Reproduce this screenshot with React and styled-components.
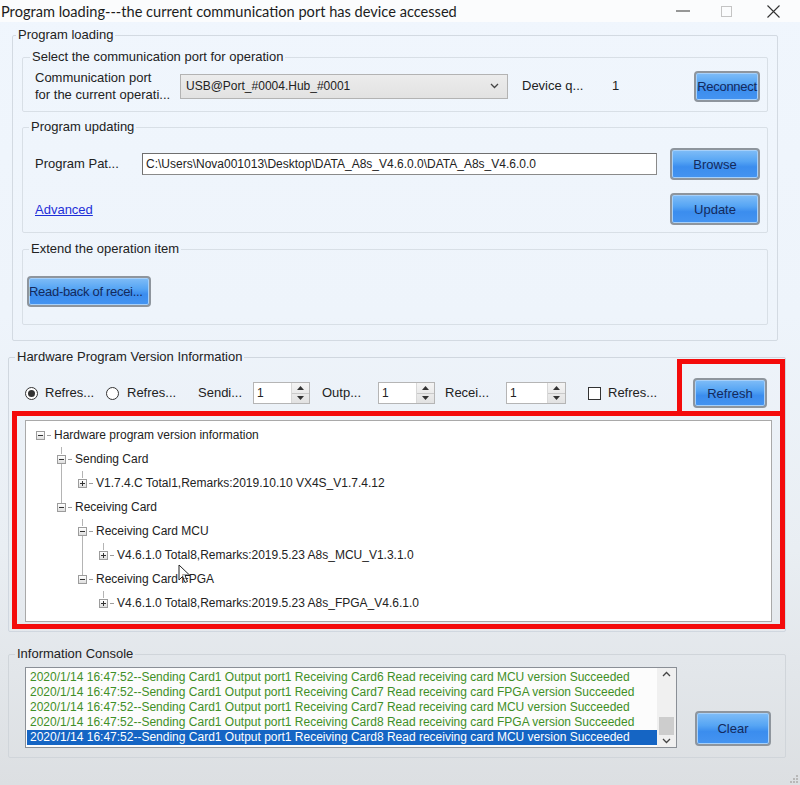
import React from 'react';
import styled, { createGlobalStyle } from 'styled-components';

const GlobalStyle = createGlobalStyle`
  html, body {
    margin: 0;
    padding: 0;
  }
  body {
    font-family: "Liberation Sans", Arial, sans-serif;
    font-size: 13px;
    color: #222;
  }
`;

const Window = styled.div`
  position: relative;
  width: 800px;
  height: 785px;
  overflow: hidden;
  display: flex;
  flex-direction: column;
  background: linear-gradient(#f0f6fd 0%, #eef4fb 40%, #e9eef3 70%, #dcdfe2 100%);
`;

const TitleBar = styled.div`
  height: 22px;
  display: flex;
  align-items: center;
  background: #fbfcfd;
`;

const Title = styled.div`
  flex: 1;
  padding-left: 1px;
  font-family: Lato, "Noto Sans", sans-serif;
  font-size: 14.6px;
  color: #1c1c1c;
  white-space: nowrap;
`;

const Ctl = styled.div`
  width: ${p => p.$w}px;
  height: 22px;
  display: flex;
  align-items: center;
  justify-content: center;
`;

const Body = styled.div`
  flex: 1;
  display: flex;
  flex-direction: column;
  padding: 0 14px 0 8px;
`;

const Group = styled.fieldset`
  margin: ${p => p.$m || '0'};
  padding: 0;
  border: 1px solid ${p => p.$line || '#d3dae2'};
  border-radius: 2px;
  min-width: 0;
`;

const Legend = styled.legend`
  margin-left: ${p => p.$x || 6}px;
  padding: 0 2px;
  font-size: 13px;
  line-height: 16px;
  color: #222;
`;

const Stack = styled.div`
  display: flex;
  flex-direction: column;
  gap: ${p => p.$gap || 0}px;
  padding: ${p => p.$pad};
`;

const Row = styled.div`
  display: flex;
  align-items: center;
  height: ${p => p.$h || 32}px;
  padding: ${p => p.$pad || 0};
`;

const Text = styled.span`
  flex: none;
  width: ${p => (p.$w ? `${p.$w}px` : 'auto')};
  margin-left: ${p => p.$ml || 0}px;
  font-size: ${p => p.$fs || 13}px;
  line-height: ${p => p.$lh || 16}px;
  white-space: nowrap;
`;

const Combo = styled.div`
  width: 328px;
  height: 25px;
  box-sizing: border-box;
  border: 1px solid #b3b3b3;
  background: linear-gradient(#ececec, #e2e2e2);
  display: flex;
  align-items: center;
  justify-content: space-between;
  padding: 0 8px 0 5px;
  font-size: 12px;
`;

const PathInput = styled.div`
  width: 515px;
  height: 22px;
  box-sizing: border-box;
  border: 1px solid #8a8a8a;
  border-top-color: #6f6f6f;
  border-left-color: #6f6f6f;
  background: #fff;
  display: flex;
  align-items: center;
  padding-left: 3px;
  font-size: 12px;
  white-space: nowrap;
  overflow: hidden;
`;

const BlueButton = styled.button`
  flex: none;
  width: ${p => p.$w}px;
  height: ${p => p.$h || 32}px;
  margin-left: ${p => (p.$auto ? 'auto' : `${p.$ml || 0}px`)};
  margin-right: ${p => p.$mr || 0}px;
  box-sizing: border-box;
  border: 2px solid #8e959d;
  border-radius: 4px;
  background: linear-gradient(#80bdf7 0%, #56a5f4 40%, #3b8dee 60%, #4594f1 100%);
  box-shadow: inset 0 0 0 1px #a6d0fa;
  color: #142a5c;
  font-family: "Liberation Sans", Arial, sans-serif;
  font-size: ${p => p.$fs || 13}px;
  letter-spacing: ${p => p.$ls || 0}px;
  text-align: ${p => p.$align || 'center'};
  padding: 0 ${p => p.$px || 0}px;
  white-space: nowrap;
`;

const ButtonCol = styled.div`
  display: grid;
  grid-template-columns: 1fr 90px;
  row-gap: 13px;
  column-gap: 13px;
  align-items: center;
  padding: 13px 7px 7px 12px;
`;

const LinkText = styled.a`
  color: #1e2fd8;
  text-decoration: underline;
  font-size: 13px;
  cursor: pointer;
`;

const Radio = styled.span`
  flex: none;
  width: 13px;
  height: 13px;
  box-sizing: border-box;
  border: 1px solid #333;
  border-radius: 50%;
  background: #fff;
  display: flex;
  align-items: center;
  justify-content: center;
  &::after {
    content: '';
    width: 7px;
    height: 7px;
    border-radius: 50%;
    background: ${p => (p.$on ? '#333' : 'transparent')};
  }
`;

const Check = styled.span`
  flex: none;
  width: 13px;
  height: 13px;
  box-sizing: border-box;
  border: 1px solid #333;
  background: #fff;
`;

const Spin = styled.div`
  flex: none;
  width: ${p => p.$w}px;
  height: 22px;
  box-sizing: border-box;
  border: 1px solid #b5b5b5;
  background: #fff;
  display: flex;
`;

const SpinValue = styled.span`
  flex: 1;
  padding-left: 3px;
  font-size: 12px;
  line-height: 20px;
`;

const SpinArrows = styled.div`
  width: 17px;
  display: flex;
  flex-direction: column;
  border-left: 1px solid #d8d8d8;
  background: linear-gradient(#f4f4f4, #e2e2e2);
`;

const SpinHalf = styled.div`
  flex: 1;
  display: flex;
  align-items: center;
  justify-content: center;
  border-bottom: ${p => (p.$top ? '1px solid #c9c9c9' : 'none')};
`;

const TreeBox = styled.div`
  height: 202px;
  margin-top: 12px;
  box-sizing: border-box;
  border: 1px solid #a9a9a9;
  background: #fff;
  padding: 2px 0 0 10px;
`;

const TreeRow = styled.div`
  height: 24px;
  display: flex;
  align-items: center;
  padding-left: ${p => p.$level * 21}px;
  font-size: 12px;
  color: #222;
  white-space: nowrap;
`;

const Expander = styled.span`
  position: relative;
  flex: none;
  width: 9px;
  height: 9px;
  box-sizing: border-box;
  border: 1px solid #9c9c9c;
  background: linear-gradient(#ffffff, #dedede);
  display: flex;
  align-items: center;
  justify-content: center;
  &::before {
    content: '';
    display: ${p => (p.$level > 0 ? 'block' : 'none')};
    position: absolute;
    left: 3px;
    top: -9px;
    height: 7px;
    border-left: 1px solid #b4b4b4;
  }
  &::after {
    content: '';
    display: ${p => (p.$next ? 'block' : 'none')};
    position: absolute;
    left: 3px;
    top: 8px;
    height: ${p => p.$next * 24 - 9}px;
    border-left: 1px solid #b4b4b4;
  }
`;

const Dash = styled.span`
  width: 4px;
  margin: 0 3px 0 2px;
  border-top: 1px solid #9c9c9c;
`;

const ConsoleRow = styled.div`
  display: flex;
  align-items: flex-end;
  justify-content: space-between;
  padding: 5px 14px 9px 16px;
`;

const ListBox = styled.div`
  width: 652px;
  height: 81px;
  box-sizing: border-box;
  border: 1px solid #8a8f96;
  background: #fcfcfc;
  display: flex;
`;

const Lines = styled.div`
  flex: 1;
  padding: 2px 0 0 1px;
  overflow: hidden;
`;

const LogLine = styled.div`
  height: 15px;
  line-height: 15px;
  padding-left: 3px;
  font-size: 12px;
  white-space: nowrap;
  color: ${p => (p.$sel ? '#fff' : '#3f8f26')};
  background: ${p => (p.$sel ? '#1565c4' : 'transparent')};
`;

const ScrollBar = styled.div`
  width: 19px;
  display: flex;
  flex-direction: column;
  align-items: center;
  background: #f0f0f0;
  padding: 3px 0;
  box-sizing: border-box;
`;

const Thumb = styled.div`
  width: 15px;
  height: 18px;
  margin: auto 0 3px;
  background: #cdcdcd;
`;

const Footer = styled.div`
  flex: 1;
  display: flex;
  justify-content: flex-end;
  align-items: flex-end;
  padding: 0 2px 2px 0;
  margin-right: -14px;
`;

const Frame = styled.div`
  position: absolute;
  left: ${p => p.$x}px;
  top: ${p => p.$y}px;
  width: ${p => p.$w}px;
  height: ${p => p.$h}px;
  box-sizing: border-box;
  border: 5px solid #f40b0b;
  pointer-events: none;
`;

const Pointer = styled.svg`
  position: absolute;
  left: 178px;
  top: 564px;
`;

const Chevron = ({ up }) => (
  <svg width="9" height="6" viewBox="0 0 9 6">
    <path d={up ? 'M1 5 L4.5 1.5 L8 5' : 'M1 1 L4.5 4.5 L8 1'} fill="none" stroke="#444" strokeWidth="1.3" />
  </svg>
);

const Tri = ({ up }) => (
  <svg width="7" height="4" viewBox="0 0 7 4">
    <path d={up ? 'M0 4 L3.5 0 L7 4 Z' : 'M0 0 L3.5 4 L7 0 Z'} fill="#333" />
  </svg>
);

const SpinBox = ({ w }) => (
  <Spin $w={w}>
    <SpinValue>1</SpinValue>
    <SpinArrows>
      <SpinHalf $top>
        <Tri up />
      </SpinHalf>
      <SpinHalf>
        <Tri />
      </SpinHalf>
    </SpinArrows>
  </Spin>
);

const treeItems = [
  { level: 0, kind: 'minus', text: 'Hardware program version information' },
  { level: 1, kind: 'minus', text: 'Sending Card', next: 2 },
  { level: 2, kind: 'plus', text: 'V1.7.4.C Total1,Remarks:2019.10.10 VX4S_V1.7.4.12' },
  { level: 1, kind: 'minus', text: 'Receiving Card' },
  { level: 2, kind: 'minus', text: 'Receiving Card MCU', next: 2 },
  { level: 3, kind: 'plus', text: 'V4.6.1.0 Total8,Remarks:2019.5.23 A8s_MCU_V1.3.1.0' },
  { level: 2, kind: 'minus', text: 'Receiving Card FPGA' },
  { level: 3, kind: 'plus', text: 'V4.6.1.0 Total8,Remarks:2019.5.23 A8s_FPGA_V4.6.1.0' },
];

const logs = [
  '2020/1/14 16:47:52--Sending Card1 Output port1 Receiving Card6 Read receiving card MCU version Succeeded',
  '2020/1/14 16:47:52--Sending Card1 Output port1 Receiving Card7 Read receiving card FPGA version Succeeded',
  '2020/1/14 16:47:52--Sending Card1 Output port1 Receiving Card7 Read receiving card MCU version Succeeded',
  '2020/1/14 16:47:52--Sending Card1 Output port1 Receiving Card8 Read receiving card FPGA version Succeeded',
  '2020/1/14 16:47:52--Sending Card1 Output port1 Receiving Card8 Read receiving card MCU version Succeeded',
];

const App = () => {
  return (
    <Window>
      <GlobalStyle />
      <TitleBar>
        <Title>Program loading---the current communication port has device accessed</Title>
        <Ctl $w={46}>
          <svg width="14" height="2"><rect width="14" height="1" y="0.5" fill="#333" /></svg>
        </Ctl>
        <Ctl $w={40}>
          <svg width="11" height="11"><rect x="0.5" y="0.5" width="10" height="10" fill="none" stroke="#c4c4c4" /></svg>
        </Ctl>
        <Ctl $w={54}>
          <svg width="13" height="13" viewBox="0 0 13 13">
            <path d="M0.5 0.5 L12.5 12.5 M12.5 0.5 L0.5 12.5" stroke="#333" strokeWidth="1.1" />
          </svg>
        </Ctl>
      </TitleBar>

      <Body>
        <Group $m="5px 8px 0 4px">
          <Legend $x={3}>Program loading</Legend>
          <Stack $gap={7} $pad="6px 9px 15px 9px">
            <Group $line="#d8dfe6">
              <Legend $x={7}>Select the communication port for operation</Legend>
              <Row $pad="0 7px 0 12px" style={{ marginTop: 5, marginBottom: 9 }}>
                <Text $w={145} $lh={17}>
                  Communication port
                  <br />
                  for the current operati...
                </Text>
                <Combo>
                  <span>USB@Port_#0004.Hub_#0001</span>
                  <Chevron />
                </Combo>
                <Text $w={90} $ml={14}>Device q...</Text>
                <Text>1</Text>
                <BlueButton $w={66} $h={31} $auto $ls={-0.3}>Reconnect</BlueButton>
              </Row>
            </Group>

            <Group $line="#d8dfe6">
              <Legend $x={6}>Program updating</Legend>
              <ButtonCol>
                <Row>
                  <Text $w={107}>Program Pat...</Text>
                  <PathInput>C:\Users\Nova001013\Desktop\DATA_A8s_V4.6.0.0\DATA_A8s_V4.6.0.0</PathInput>
                </Row>
                <BlueButton $w={90}>Browse</BlueButton>
                <Row>
                  <LinkText>Advanced</LinkText>
                </Row>
                <BlueButton $w={90}>Update</BlueButton>
              </ButtonCol>
            </Group>

            <Group $line="#d8dfe6" style={{ marginTop: 1 }}>
              <Legend $x={6}>Extend the operation item</Legend>
              <Row $h={31} $pad="0 4px" style={{ margin: '19px 0 17px' }}>
                <BlueButton $w={124} $h={31} $align="left" $px={0} $ls={-0.3}>
                  Read-back of recei...
                </BlueButton>
              </Row>
            </Group>
          </Stack>
        </Group>

        <Group $m="8px 0 0 0" $line="#d0d7df">
          <Legend $x={6}>Hardware Program Version Information</Legend>
          <Stack $pad="13px 13px 9px 16px">
            <Row $h={30}>
              <Radio $on />
              <Text $w={61} $ml={7}>Refres...</Text>
              <Radio />
              <Text $w={71} $ml={8}>Refres...</Text>
              <Text $w={55}>Sendi...</Text>
              <SpinBox w={57} />
              <Text $w={56} $ml={12}>Outp...</Text>
              <SpinBox w={57} />
              <Text $w={61} $ml={10}>Recei...</Text>
              <SpinBox w={60} />
              <Check style={{ marginLeft: 22 }} />
              <Text $ml={7}>Refres...</Text>
              <BlueButton $w={74} $h={30} $auto $mr={5}>Refresh</BlueButton>
            </Row>
            <TreeBox>
              {treeItems.map((item, i) => (
                <TreeRow key={i} $level={item.level}>
                  <Expander $level={item.level} $next={item.next || 0}>
                    <svg width="7" height="7" viewBox="0 0 7 7">
                      <rect x="1" y="3" width="5" height="1" fill="#333" />
                      {item.kind === 'plus' && <rect x="3" y="1" width="1" height="5" fill="#333" />}
                    </svg>
                  </Expander>
                  <Dash />
                  {item.text}
                </TreeRow>
              ))}
            </TreeBox>
          </Stack>
        </Group>

        <Group $m="14px 0 0 0" $line="#d0d5da">
          <Legend $x={6}>Information Console</Legend>
          <ConsoleRow>
            <ListBox>
              <Lines>
                {logs.map((l, i) => (
                  <LogLine key={i} $sel={i === logs.length - 1}>{l}</LogLine>
                ))}
              </Lines>
              <ScrollBar>
                <Chevron up />
                <Thumb />
                <Chevron />
              </ScrollBar>
            </ListBox>
            <BlueButton $w={76} $h={35} style={{ marginBottom: 2 }}>Clear</BlueButton>
          </ConsoleRow>
        </Group>

        <Footer>
          <svg width="8" height="8" viewBox="0 0 8 8">
            <rect x="6" y="0" width="2" height="2" fill="#b8b8b8" />
            <rect x="3" y="3" width="2" height="2" fill="#b8b8b8" />
            <rect x="6" y="3" width="2" height="2" fill="#b8b8b8" />
            <rect x="0" y="6" width="2" height="2" fill="#b8b8b8" />
            <rect x="3" y="6" width="2" height="2" fill="#b8b8b8" />
            <rect x="6" y="6" width="2" height="2" fill="#b8b8b8" />
          </svg>
        </Footer>
      </Body>

      <Frame $x={677} $y={359} $w={108} $h={57} />
      <Frame $x={12} $y={411} $w={773} $h={218} />

      <Pointer width="13" height="20" viewBox="0 0 13 20">
        <path d="M1 1 L1 16 L4.5 12.5 L7 18.5 L9.5 17.5 L7 11.5 L12 11.5 Z" fill="#fff" fillOpacity="0.6" stroke="#222" strokeWidth="1" />
      </Pointer>
    </Window>
  );
};

export default App;
